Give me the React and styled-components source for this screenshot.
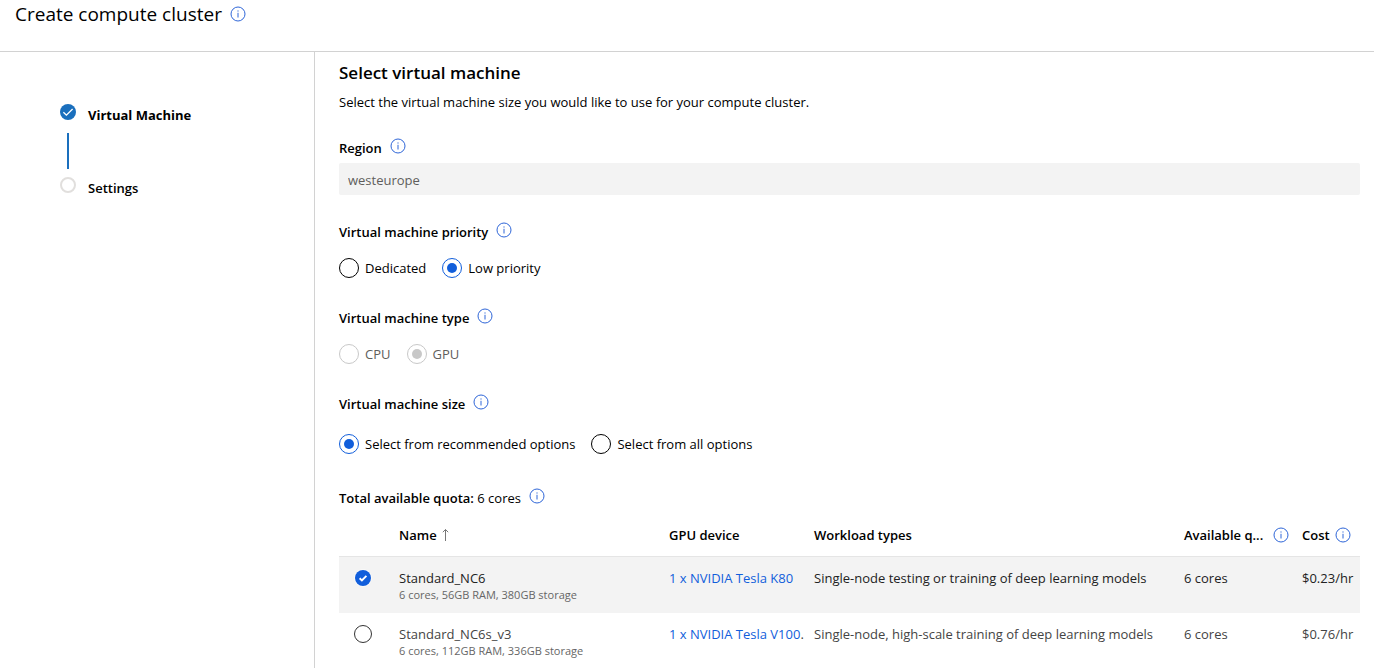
import React, { useState } from "react";
import styled, { createGlobalStyle } from "styled-components";

const GlobalStyle = createGlobalStyle`
  *, *::before, *::after { box-sizing: border-box; }
  body {
    margin: 0;
    background: #fff;
    color: #000;
    font-family: "Segoe UI", "Open Sans", "Noto Sans", sans-serif;
    font-size: 13px;
    line-height: 20px;
  }
`;

const Page = styled.div`
  display: flex;
  flex-direction: column;
  min-height: 100vh;
`;

const Header = styled.header`
  display: flex;
  align-items: flex-start;
  gap: 8px;
  height: 52px;
  padding: 0 15px;
  border-bottom: 1px solid #d2d2d2;
`;

const Title = styled.h1`
  margin: 0;
  font-size: 19px;
  font-weight: 400;
  line-height: 28px;
`;

const Body = styled.div`
  display: flex;
  flex: 1;
`;

const Sidebar = styled.nav`
  flex: 0 0 315px;
  padding: 52px 24px 0 60px;
  border-right: 1px solid #d2d2d2;
`;

const Steps = styled.ol`
  display: flex;
  flex-direction: column;
  margin: 0;
  padding: 0;
  list-style: none;
`;

const Step = styled.li`
  display: flex;
  align-items: flex-start;
  gap: 12px;
  font-weight: ${(p) => (p.$current ? 700 : 600)};
`;

const StepTrack = styled.span`
  display: flex;
  flex-direction: column;
  align-items: center;
  gap: 13px;
  padding-bottom: ${(p) => (p.$last ? "0" : "8px")};
`;

const StepLine = styled.span`
  width: 2px;
  height: 36px;
  background: #1a6fbd;
`;

const StepCircle = styled.span`
  width: 16px;
  height: 16px;
  border: 2px solid #e1dfdd;
  border-radius: 50%;
`;

const StepLabel = styled.span`
  padding-top: 1px;
`;

const Main = styled.main`
  flex: 1;
  min-width: 0;
  padding: 7px 14px 0 24px;
`;

const Heading = styled.h2`
  margin: 0;
  font-size: 17px;
  font-weight: 600;
  line-height: 28px;
`;

const Intro = styled.p`
  margin: 5px 0 26px;
`;

const LabelRow = styled.div`
  display: flex;
  align-items: center;
  gap: 8px;
  font-weight: 600;
`;

const InfoButton = styled.button`
  display: flex;
  flex: none;
  padding: 0;
  margin-bottom: ${(p) => (p.$raised ? "4px" : "0")};
  margin-top: ${(p) => (p.$low ? "6px" : "0")};
  border: 0;
  background: none;
  cursor: pointer;
`;

const RegionInput = styled.input`
  display: block;
  width: 100%;
  height: 32px;
  margin: 5px 0 27px;
  padding: 2px 9px 0;
  border: 0;
  border-radius: 2px;
  background: #f3f3f3;
  color: #605e5c;
  font: inherit;
`;

const Options = styled.div`
  display: flex;
  gap: 16px;
  margin: ${(p) => (p.$spacious ? "20px 0 34px" : "16px 0 30px")};
`;

const Option = styled.label`
  display: flex;
  align-items: center;
  gap: 6px;
  color: ${(p) => (p.$disabled ? "#605e5c" : "#000")};
`;

const Radio = styled.input`
  display: grid;
  place-items: center;
  width: 20px;
  height: 20px;
  margin: 0;
  border: 1px solid #000;
  border-radius: 50%;
  appearance: none;
  background: #fff;

  &:checked {
    border-color: #115edb;
  }
  &:checked::after {
    content: "";
    width: 10px;
    height: 10px;
    border-radius: 50%;
    background: #115edb;
  }
  &:disabled {
    border-color: #c8c8c8;
  }
  &:disabled:checked::after {
    background: #c8c8c8;
  }
`;

const Plain = styled.span`
  font-weight: 400;
`;

const Table = styled.table`
  width: 100%;
  margin-top: 6px;
  border-collapse: separate;
  border-spacing: 0;
  table-layout: fixed;
`;

const Col = styled.col`
  width: ${(p) => p.$width || "auto"};
`;

const HeadCell = styled.th`
  height: 43px;
  padding: 0;
  border-bottom: 1px solid #e5e5e5;
  font-weight: 600;
  text-align: left;
  white-space: nowrap;
`;

const HeadContent = styled.span`
  display: flex;
  align-items: center;
  gap: ${(p) => (p.$wide ? "10px" : "5px")};
`;

const Row = styled.tr`
  height: 56px;
  background: ${(p) => (p.$selected ? "#f3f3f3" : "#fff")};
  color: ${(p) => (p.$selected ? "#222" : "#444")};

  &:last-child {
    height: 55px;
  }
`;

const Cell = styled.td`
  padding: 11px 0 0;
  overflow: hidden;
  vertical-align: top;
  white-space: nowrap;
`;

const Mark = styled.span`
  display: grid;
  place-items: center;
  width: 48px;
  height: 20px;

  > * {
    grid-area: 1 / 1;
  }
  svg {
    pointer-events: none;
  }
`;

const RowRadio = styled.input`
  width: 18px;
  height: 18px;
  margin: 0;
  border: 1px solid #333;
  border-radius: 50%;
  appearance: none;
  background: #fff;

  &:checked {
    border-color: #f9f9f9;
  }
`;

const Specs = styled.div`
  color: #666;
  font-size: 11px;
  line-height: 14px;
`;

const DeviceLink = styled.a`
  color: #115edb;
  text-decoration: none;
`;

function InfoIcon({ about, raised, low }) {
  return (
    <InfoButton type="button" aria-label={`About ${about}`} $raised={raised} $low={low}>
      <svg width="16" height="16" viewBox="0 0 16 16" fill="none" stroke="#2f66d8">
        <circle cx="8" cy="8" r="7" />
        <path d="M8 6.8V11.5M8 4.4V5.6" />
      </svg>
    </InfoButton>
  );
}

function CheckCircle({ color, bold }) {
  return (
    <svg width="16" height="16" viewBox="0 0 16 16" fill="none">
      <circle cx="8" cy="8" r="8" fill={color} />
      {bold ? (
        <path d="M4.6 8.2 6.9 10.4 11.4 5.9" stroke="#fff" strokeWidth="1.9" />
      ) : (
        <path d="M3.4 8.3 6.4 11.2 12.6 5" stroke="#fff" strokeWidth="1.3" />
      )}
    </svg>
  );
}

function SortArrow() {
  return (
    <svg width="8" height="14" viewBox="0 0 8 14" fill="none" stroke="#777">
      <path d="M3.5 13V1.5M0.8 4.2 3.5 1.5 6.2 4.2" />
    </svg>
  );
}

function RadioOption({ group, label, ...rest }) {
  return (
    <Option $disabled={rest.disabled}>
      <Radio type="radio" name={group} {...rest} />
      {label}
    </Option>
  );
}

const machines = [
  {
    name: "Standard_NC6",
    specs: "6 cores, 56GB RAM, 380GB storage",
    device: "1 x NVIDIA Tesla K80",
    workload: "Single-node testing or training of deep learning models",
    quota: "6 cores",
    cost: "$0.23/hr",
  },
  {
    name: "Standard_NC6s_v3",
    specs: "6 cores, 112GB RAM, 336GB storage",
    device: "1 x NVIDIA Tesla V100",
    more: ".",
    workload: "Single-node, high-scale training of deep learning models",
    quota: "6 cores",
    cost: "$0.76/hr",
  },
];

export default function App() {
  const [selected, setSelected] = useState("Standard_NC6");

  return (
    <Page>
      <GlobalStyle />
      <Header>
        <Title>Create compute cluster</Title>
        <InfoIcon about="compute clusters" low />
      </Header>
      <Body>
        <Sidebar aria-label="Steps">
          <Steps>
            <Step $current aria-current="step">
              <StepTrack>
                <CheckCircle color="#1a6fbd" />
                <StepLine />
              </StepTrack>
              <StepLabel>Virtual Machine</StepLabel>
            </Step>
            <Step>
              <StepTrack $last>
                <StepCircle />
              </StepTrack>
              <StepLabel>Settings</StepLabel>
            </Step>
          </Steps>
        </Sidebar>
        <Main>
          <Heading>Select virtual machine</Heading>
          <Intro>Select the virtual machine size you would like to use for your compute cluster.</Intro>

          <LabelRow>
            <label htmlFor="region">Region</label>
            <InfoIcon about="region" raised />
          </LabelRow>
          <RegionInput id="region" type="text" value="westeurope" disabled readOnly />

          <LabelRow>
            <span id="priority">Virtual machine priority</span>
            <InfoIcon about="virtual machine priority" raised />
          </LabelRow>
          <Options role="radiogroup" aria-labelledby="priority">
            <RadioOption group="priority" label="Dedicated" />
            <RadioOption group="priority" label="Low priority" defaultChecked />
          </Options>

          <LabelRow>
            <span id="type">Virtual machine type</span>
            <InfoIcon about="virtual machine type" raised />
          </LabelRow>
          <Options role="radiogroup" aria-labelledby="type">
            <RadioOption group="type" label="CPU" disabled />
            <RadioOption group="type" label="GPU" disabled defaultChecked />
          </Options>

          <LabelRow>
            <span id="size">Virtual machine size</span>
            <InfoIcon about="virtual machine size" raised />
          </LabelRow>
          <Options $spacious role="radiogroup" aria-labelledby="size">
            <RadioOption group="size" label="Select from recommended options" defaultChecked />
            <RadioOption group="size" label="Select from all options" />
          </Options>

          <LabelRow>
            <span>
              Total available quota: <Plain>6 cores</Plain>
            </span>
            <InfoIcon about="total available quota" raised />
          </LabelRow>

          <Table>
            <colgroup>
              <Col $width="60px" />
              <Col $width="270px" />
              <Col $width="145px" />
              <Col />
              <Col $width="118px" />
              <Col $width="58px" />
            </colgroup>
            <thead>
              <tr>
                <HeadCell aria-label="Selection" />
                <HeadCell aria-sort="ascending">
                  <HeadContent>
                    Name <SortArrow />
                  </HeadContent>
                </HeadCell>
                <HeadCell>GPU device</HeadCell>
                <HeadCell>Workload types</HeadCell>
                <HeadCell>
                  <HeadContent $wide>
                    Available q... <InfoIcon about="available quota" />
                  </HeadContent>
                </HeadCell>
                <HeadCell>
                  <HeadContent>
                    Cost <InfoIcon about="cost" />
                  </HeadContent>
                </HeadCell>
              </tr>
            </thead>
            <tbody>
              {machines.map((m) => {
                const isSelected = m.name === selected;
                return (
                  <Row key={m.name} $selected={isSelected}>
                    <Cell>
                      <Mark>
                        <RowRadio
                          type="radio"
                          name="machine"
                          aria-label={m.name}
                          checked={isSelected}
                          onChange={() => setSelected(m.name)}
                        />
                        {isSelected && <CheckCircle color="#115edb" bold />}
                      </Mark>
                    </Cell>
                    <Cell>
                      {m.name}
                      <Specs>{m.specs}</Specs>
                    </Cell>
                    <Cell>
                      <DeviceLink href="#device">{m.device}</DeviceLink>
                      {m.more}
                    </Cell>
                    <Cell>{m.workload}</Cell>
                    <Cell>{m.quota}</Cell>
                    <Cell>{m.cost}</Cell>
                  </Row>
                );
              })}
            </tbody>
          </Table>
        </Main>
      </Body>
    </Page>
  );
}
